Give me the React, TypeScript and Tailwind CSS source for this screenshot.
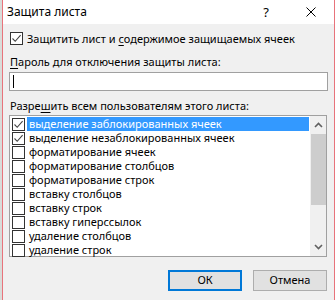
import React from "react";

const ITEMS: { label: string; checked: boolean }[] = [
  { label: "выделение заблокированных ячеек", checked: true },
  { label: "выделение незаблокированных ячеек", checked: true },
  { label: "форматирование ячеек", checked: false },
  { label: "форматирование столбцов", checked: false },
  { label: "форматирование строк", checked: false },
  { label: "вставку столбцов", checked: false },
  { label: "вставку строк", checked: false },
  { label: "вставку гиперссылок", checked: false },
  { label: "удаление столбцов", checked: false },
  { label: "удаление строк", checked: false },
];

function Check({ checked }: { checked: boolean }) {
  return (
    <div className="w-[13px] h-[13px] border border-[#333333] bg-white flex items-center justify-center shrink-0">
      {checked && (
        <svg width="11" height="11" viewBox="0 0 11 11">
          <path d="M1.5 5.5 L4.2 8.3 L9.6 2.2" fill="none" stroke="#444444" strokeWidth="1.1" />
        </svg>
      )}
    </div>
  );
}

export default function App() {
  return (
    <div
      className="w-[336px] h-[300px] flex overflow-hidden bg-[#f0f0f0] text-[11px] text-black"
      style={{ fontFamily: '"Noto Sans", "Open Sans", sans-serif' }}
    >
      <div className="w-[2px] bg-[#d9dcd9]" />
      <div className="w-[1px] bg-[#e8737b]" />
      <div className="flex-1 flex flex-col bg-[#f0f0f0]">
        {/* title bar */}
        <div className="h-[24px] shrink-0 bg-white flex items-center pl-[4px]">
          <span className="text-[12px] leading-none">Защита листа</span>
          <span className="ml-auto mr-[37px] text-[13px] leading-none">?</span>
          <svg width="10" height="10" viewBox="0 0 10 10" className="mr-[18px]">
            <path d="M0.5 0.5 L9.5 9.5 M9.5 0.5 L0.5 9.5" stroke="#000" strokeWidth="1" />
          </svg>
        </div>

        <div className="flex items-center gap-[4px] pl-[7px] mt-[8px] h-[13px] shrink-0">
          <Check checked />
          <span className="leading-[13px]">
            Защитить лист и <span className="underline underline-offset-2">с</span>одержимое защищаемых ячеек
          </span>
        </div>

        <div className="pl-[7px] mt-[10px] h-[14px] leading-[14px] shrink-0">
          <span className="underline underline-offset-2">П</span>ароль для отключения защиты листа:
        </div>

        <div className="ml-[6px] mr-[6px] mt-[3px] h-[19px] shrink-0 bg-white border border-[#a0a0a0] flex items-center pl-[3px]">
          <div className="w-[1px] h-[13px] bg-black" />
        </div>

        <div className="pl-[7px] mt-[8px] h-[14px] leading-[14px] shrink-0">
          Разре<span className="underline underline-offset-2">ш</span>ить всем пользователям этого листа:
        </div>

        <div className="ml-[6px] mr-[7px] mt-[2px] h-[142px] shrink-0 bg-white border border-[#a0a0a0] flex">
          <div className="flex-1 flex flex-col pt-[1px]">
            {ITEMS.map((it, i) => (
              <div key={it.label} className="h-[14px] flex items-center">
                <div className="w-[17px] flex justify-end pr-[2px]">
                  <Check checked={it.checked} />
                </div>
                <span
                  className={
                    "flex-1 h-[14px] leading-[14px] pl-[2px] whitespace-nowrap " +
                    (i === 0 ? "bg-[#3399ff] text-white" : "")
                  }
                >
                  {it.label}
                </span>
              </div>
            ))}
          </div>
          <div className="w-[16px] bg-[#f0f0f0] flex flex-col items-center ml-[1px]">
            <div className="h-[18px] flex items-center justify-center">
              <svg width="9" height="6" viewBox="0 0 9 6">
                <path d="M1 5 L4.5 1.5 L8 5" fill="none" stroke="#606060" strokeWidth="1.6" />
              </svg>
            </div>
            <div className="w-[15px] h-[71px] bg-[#cdcdcd]" />
            <div className="flex-1" />
            <div className="h-[18px] flex items-center justify-center">
              <svg width="9" height="6" viewBox="0 0 9 6">
                <path d="M1 1 L4.5 4.5 L8 1" fill="none" stroke="#606060" strokeWidth="1.6" />
              </svg>
            </div>
          </div>
        </div>

        <div className="flex justify-end gap-[11px] mr-[7px] mt-[13px] shrink-0">
          <button className="w-[74px] h-[21px] bg-[#e1e1e1] border-2 border-[#0078d7] flex items-center justify-center">
            ОК
          </button>
          <button className="w-[74px] h-[21px] bg-[#e1e1e1] border border-[#adadad] flex items-center justify-center">
            Отмена
          </button>
        </div>
      </div>
      <div className="w-[1px] bg-[#e8737b]" />
      <div className="w-[1px] bg-white" />
    </div>
  );
}
